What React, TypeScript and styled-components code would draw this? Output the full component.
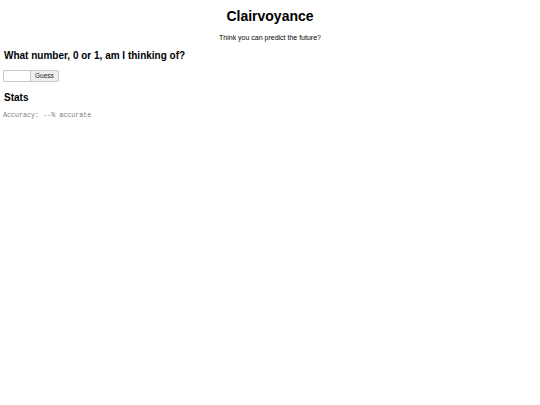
import React, { useState } from "react";
import styled, { createGlobalStyle } from "styled-components";

const GlobalStyle = createGlobalStyle`
  body {
    margin: 0;
    background: #fff;
    color: #000;
    font-family: "Liberation Sans", Arial, sans-serif;
  }
`;

const Page = styled.main`
  padding: 0 3px;
`;

const Header = styled.header`
  text-align: center;
  padding-top: 7px;
`;

const Title = styled.h1`
  margin: 0;
  font-size: 14px;
  line-height: 18px;
  font-weight: bold;
`;

const Tagline = styled.p`
  margin: 8px 0 0;
  font-size: 7px;
  line-height: 9px;
`;

const SectionTitle = styled.h2<{ $gap?: number }>`
  margin: ${(p) => p.$gap ?? 7}px 0 0 1px;
  font-size: 10px;
  line-height: 13px;
  font-weight: bold;
`;

const GuessForm = styled.form`
  display: flex;
  margin-top: 8px;
`;

const NumberInput = styled.input`
  box-sizing: border-box;
  width: 27px;
  height: 12px;
  padding: 0 2px;
  border: 1px solid #c8c8c8;
  border-right: none;
  border-radius: 2px 0 0 2px;
  font-size: 7px;
  outline: none;
`;

const GuessButton = styled.button`
  box-sizing: border-box;
  height: 12px;
  padding: 0 4px;
  border: 1px solid #c8c8c8;
  border-radius: 0 2px 2px 0;
  background: #efefef;
  color: #222;
  font-family: "Liberation Sans", Arial, sans-serif;
  font-size: 6.5px;
  line-height: 10px;
  cursor: pointer;
`;

const StatLine = styled.pre`
  margin: 7px 0 0;
  font-family: "Liberation Mono", "Courier New", monospace;
  font-size: 6.7px;
  line-height: 8px;
  color: #808080;
`;

const App = () => {
  const [value, setValue] = useState("");
  const [stats, setStats] = useState({ right: 0, total: 0 });

  const handleGuess = (e: React.FormEvent) => {
    e.preventDefault();
    if (value !== "0" && value !== "1") return;
    const answer = Math.random() < 0.5 ? "0" : "1";
    setStats((s) => ({ right: s.right + (answer === value ? 1 : 0), total: s.total + 1 }));
    setValue("");
  };

  const accuracy = stats.total ? Math.round((stats.right / stats.total) * 100) : "--";

  return (
    <>
      <GlobalStyle />
      <Page>
        <Header>
          <Title>Clairvoyance</Title>
          <Tagline>Think you can predict the future?</Tagline>
        </Header>
        <SectionTitle>What number, 0 or 1, am I thinking of?</SectionTitle>
        <GuessForm onSubmit={handleGuess}>
          <NumberInput value={value} onChange={(e) => setValue(e.target.value)} />
          <GuessButton type="submit">Guess</GuessButton>
        </GuessForm>
        <SectionTitle $gap={9}>Stats</SectionTitle>
        <StatLine>Accuracy: {accuracy}% accurate</StatLine>
      </Page>
    </>
  );
};

export default App;
